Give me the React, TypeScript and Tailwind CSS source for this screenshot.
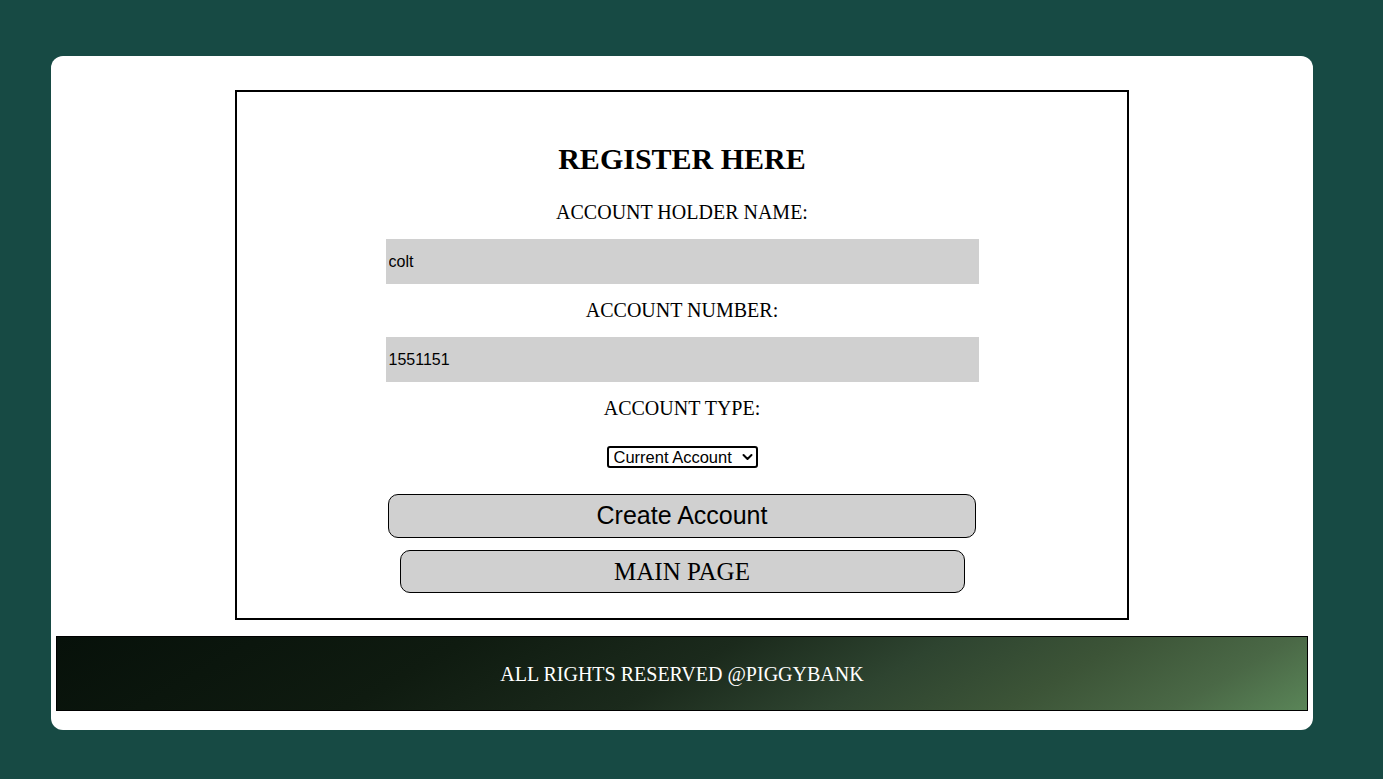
export default function App() {
  const serif = "font-['Liberation_Serif','Times_New_Roman',serif]";
  const sans = "font-['Liberation_Sans',Arial,sans-serif]";

  return (
    <div className={`min-h-screen bg-[#174a44] pt-[56px] pb-[49px] ${serif}`}>
      <div className="ml-[51px] flex w-[1262px] flex-col items-center rounded-[12px] bg-white px-[5px] pb-[19px] pt-[34px]">
        <div className="flex w-[894px] flex-col items-center border-2 border-black pb-[25px] pt-[49px] text-black">
          <h1 className="text-[30px] font-bold leading-[36px]">REGISTER HERE</h1>

          <label className="mt-[23px] text-[20px] leading-[24px]">ACCOUNT HOLDER NAME:</label>
          <input
            type="text"
            defaultValue="colt"
            className={`mt-[15px] h-[45px] w-[593px] bg-[#d0d0d0] px-[3px] text-[16px] text-black outline-none ${sans}`}
          />

          <label className="mt-[14px] text-[20px] leading-[24px]">ACCOUNT NUMBER:</label>
          <input
            type="text"
            defaultValue="1551151"
            className={`mt-[15px] h-[45px] w-[593px] bg-[#d0d0d0] px-[3px] text-[16px] text-black outline-none ${sans}`}
          />

          <label className="mt-[14px] text-[20px] leading-[24px]">ACCOUNT TYPE:</label>
          <div className="relative mt-[26px] flex">
            <select
              defaultValue="current"
              className={`h-[22px] w-[151px] appearance-none rounded-[3px] border-2 border-black bg-white pl-[5px] pr-[20px] text-[16.5px] leading-[18px] text-black ${sans}`}
            >
              <option value="current">Current Account</option>
              <option value="savings">Savings Account</option>
            </select>
            <svg
              className="pointer-events-none absolute right-[5px] top-1/2 -translate-y-1/2"
              width="11"
              height="8"
              viewBox="0 0 11 8"
              fill="none"
            >
              <path d="M1.5 2 L5.5 6 L9.5 2" stroke="black" strokeWidth="2" strokeLinecap="round" strokeLinejoin="round" />
            </svg>
          </div>

          <button
            className={`mt-[26px] h-[44px] w-[588px] rounded-[10px] border border-black bg-[#d0d0d0] text-[25px] text-black ${sans}`}
          >
            Create Account
          </button>
          <button className="mt-[12px] h-[43px] w-[565px] rounded-[10px] border border-black bg-[#d0d0d0] text-[25px] text-black">
            MAIN PAGE
          </button>
        </div>

        <footer className="mt-[16px] flex h-[75px] w-[1252px] items-center justify-center border border-black bg-[linear-gradient(150deg,#07110a_0%,#0f1b10_30%,#1b2a1c_50%,#2e4430_65%,#3c5437_78%,#4a6846_90%,#5a8558_100%)]">
          <p className="text-[20px] leading-[24px] text-white">ALL RIGHTS RESERVED @PIGGYBANK</p>
        </footer>
      </div>
    </div>
  );
}
